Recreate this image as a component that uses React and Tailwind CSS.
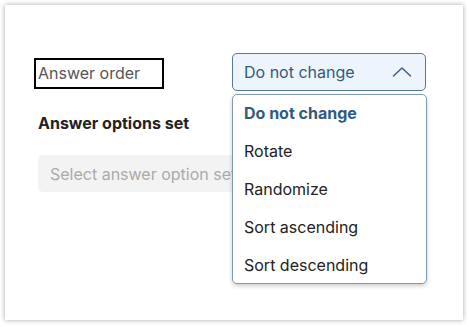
const options = ["Do not change", "Rotate", "Randomize", "Sort ascending", "Sort descending"];

export default function App() {
  return (
    <div className="w-[469px] h-[327px] bg-white p-[5px] pb-[7px] pr-[6px]" style={{ fontFamily: "Inter, 'Noto Sans', sans-serif" }}>
      <div className="h-full bg-white shadow-[0_0_5px_rgba(0,0,0,0.35)] pt-[48px] pl-[29px] pr-[37px]">
        <div className="flex items-center justify-between">
          <div className="w-[130px] h-[31px] border-2 border-black flex items-center pl-[2px] text-[16px] text-[#555] mt-[2px]">
            Answer order
          </div>
          <div className="relative w-[194px]">
            <div className="h-[38px] rounded-[5px] border border-[#55789a] bg-[#eef4fb] flex items-center justify-between pl-[11px] pr-[13px] text-[16px] text-[#2f5b80]">
              <span>Do not change</span>
              <svg width="20" height="12" viewBox="0 0 20 12" fill="none" className="text-[#3d6185]">
                <polyline points="1.5,10 10,2 18.5,10" stroke="currentColor" strokeWidth="1.5" strokeLinecap="round" strokeLinejoin="round" />
              </svg>
            </div>
            <div className="absolute z-10 left-0 top-[41px] w-[195px] h-[190px] bg-white border border-[#7f9ab5] rounded-[5px] shadow-[0_2px_4px_rgba(0,0,0,0.2)] pl-[11px]">
              {options.map((o, i) => (
                <div
                  key={o}
                  className={`h-[38px] flex items-center pb-[2px] text-[16px] ${i === 0 ? "font-bold text-[#2f5b80]" : "text-[#222]"}`}
                >
                  {o}
                </div>
              ))}
            </div>
          </div>
        </div>
        <div className="pl-[4px] mt-[20px] text-[16px] font-bold text-[#222]">Answer options set</div>
        <div className="ml-[4px] mt-[20px] h-[37px] rounded-[5px] bg-[#f3f3f3] flex items-center pl-[12px] text-[16px] text-[#aaa]">
          Select answer option set
        </div>
      </div>
    </div>
  );
}
